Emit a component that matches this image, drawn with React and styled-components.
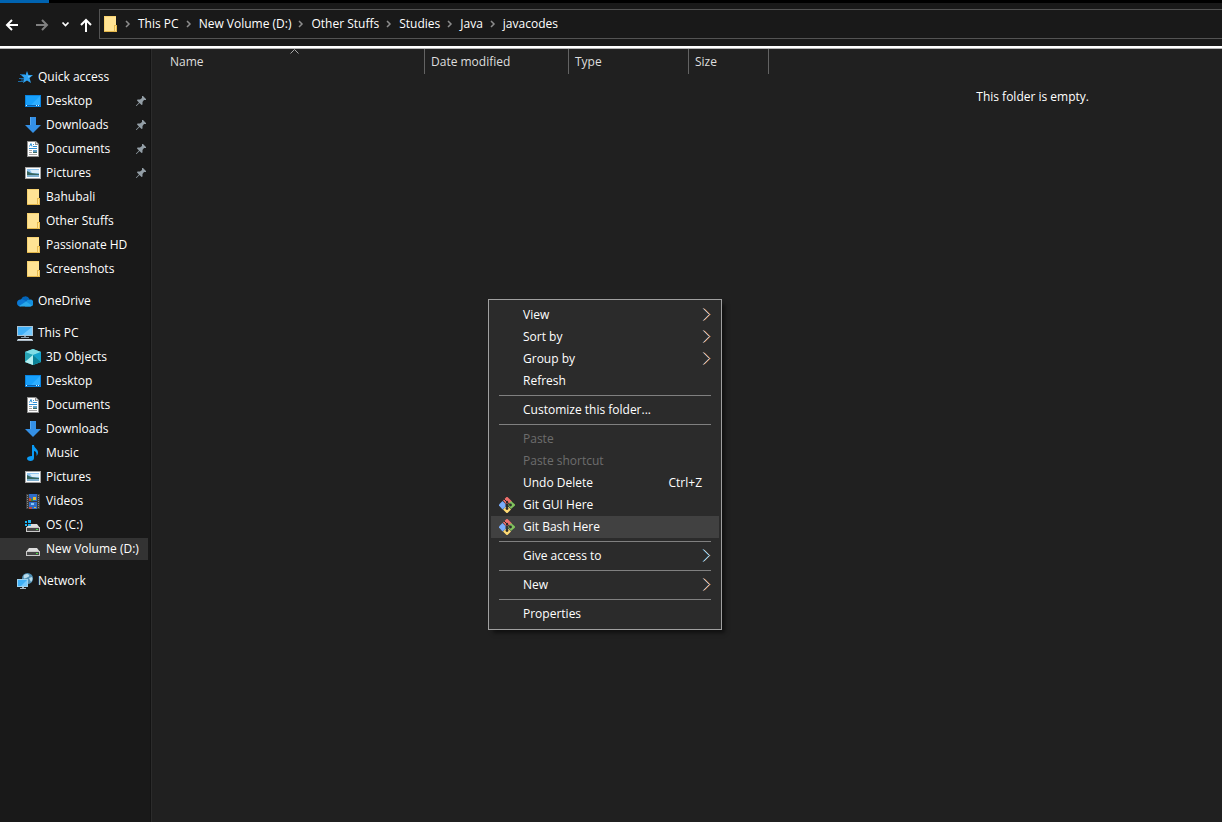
import React from "react";
import styled, { createGlobalStyle } from "styled-components";

const GlobalStyle = createGlobalStyle`
  * {
    box-sizing: border-box;
  }
  body {
    margin: 0;
    background: #202020;
    color: #ffffff;
    font-family: 'Segoe UI', 'Open Sans', 'Noto Sans', sans-serif;
    font-size: 12px;
    line-height: 16px;
  }
  button {
    font: inherit;
    color: inherit;
    border: 0;
    padding: 0;
    background: none;
  }
`

const Window = styled.div`
  display: flex;
  flex-direction: column;
  min-height: 100vh;
`

const TitleStrip = styled.div`
  height: 3px;
  background: #000000;
`

const FileTab = styled.div`
  width: 49px;
  height: 3px;
  background: #0063b1;
`

const Toolbar = styled.header`
  display: flex;
  align-items: center;
  height: 43px;
  padding-left: 4px;
  background: #191919;
`

const NavButton = styled.button`
  display: flex;
  align-items: center;
  justify-content: center;
  width: 16px;
  height: 24px;
  margin-right: ${props => props.$gap || 0}px;
  color: ${props => (props.$dim ? "#808080" : "#ffffff")};
`

const AddressBar = styled.nav`
  display: flex;
  align-items: center;
  flex: 1;
  height: 30px;
  margin-bottom: 1px;
  padding-left: 2px;
  border: 1px solid #535353;
  border-right: 0;
`

const Crumb = styled.a`
  color: #ffffff;
  text-decoration: none;
  white-space: nowrap;
`

const CrumbArrow = styled.span`
  display: flex;
  justify-content: center;
  width: 20px;
`

const Divider = styled.div`
  height: 3px;
  background: #ffffff;
  border-bottom: 1px solid #b4b4b4;
`

const Body = styled.div`
  display: flex;
  flex: 1;
`

const Sidebar = styled.nav`
  width: 150px;
  flex-shrink: 0;
  padding: 16px 2px 16px 0;
  background: #191919;
`

const Splitter = styled.div`
  width: 2px;
  background: #2b2b2b;
  border-left: 1px solid #131313;
`

const Group = styled.ul`
  list-style: none;
  margin: 0 0 8px;
  padding: 0;
`

const TreeItem = styled.li`
  padding: 1px 0;
`

const TreeLink = styled.a`
  display: flex;
  align-items: center;
  height: 22px;
  padding-left: ${props => (props.$child ? "25px" : "17px")};
  color: #ffffff;
  text-decoration: none;
  white-space: nowrap;
  background: ${props => (props.$selected ? "#333333" : "transparent")};
`

const TreeLabel = styled.span`
  flex: 1;
  margin-left: 5px;
`

const Pin = styled.span`
  display: flex;
  margin-right: 1px;
`

const Content = styled.main`
  flex: 1;
  background: #202020;
`

const FileTable = styled.table`
  width: 100%;
  table-layout: fixed;
  border-collapse: separate;
  border-spacing: 0;
`

const Column = styled.th`
  position: relative;
  width: ${props => props.$width}px;
  height: 25px;
  padding: 0 0 0 ${props => (props.$first ? "18px" : "6px")};
  border-right: ${props => (props.$width ? "1px solid #636363" : "0")};
  color: #dedede;
  font-weight: normal;
  text-align: left;
`

const SortMark = styled.span`
  position: absolute;
  top: 0;
  left: 12px;
  right: 0;
  display: flex;
  justify-content: center;
`

const EmptyMessage = styled.p`
  margin: 15px 133px 0 0;
  text-align: right;
`

const Menu = styled.div`
  position: absolute;
  left: 488px;
  top: 299px;
  width: 234px;
  padding: 4px 2px;
  background: #2b2b2b;
  border: 1px solid #a0a0a0;
  box-shadow: 4px 4px 4px -1px rgba(0, 0, 0, 0.5);
`

const MenuItem = styled.button`
  display: flex;
  align-items: center;
  width: 100%;
  height: 22px;
  padding: 0 8px;
  text-align: left;
  color: ${props => (props.disabled ? "#6d6d6d" : "#ffffff")};
  background: ${props => (props.$active ? "#414141" : "transparent")};
`

const MenuIcon = styled.span`
  display: flex;
  width: 24px;
`

const MenuLabel = styled.span`
  flex: 1;
`

const Shortcut = styled.span`
  margin-right: 9px;
`

const MenuLine = styled.hr`
  height: 1px;
  margin: 3px 8px;
  border: 0;
  background: #808080;
`

const Svg = ({ size = 16, children }) => (
  <svg width={size} height={size} viewBox={`0 0 ${size} ${size}`} aria-hidden="true">
    {children}
  </svg>
)

const ArrowIcon = ({ flip }) => (
  <Svg>
    <path
      d="M14 8H3M8 3L3 8l5 5"
      transform={flip ? "rotate(180 8 8)" : undefined}
      fill="none" stroke="currentColor" strokeWidth="2"
    />
  </Svg>
)

const UpIcon = () => (
  <Svg>
    <path d="M8 15V3M3 8l5-5 5 5" fill="none" stroke="currentColor" strokeWidth="2" />
  </Svg>
)

const DownChevron = () => (
  <Svg>
    <path d="M5.500 5.500l3 3 3-3" fill="none" stroke="currentColor" strokeWidth="1.700" />
  </Svg>
)

const CrumbChevron = () => (
  <svg width="6" height="8" viewBox="0 0 6 8" aria-hidden="true">
    <path d="M1 1l3 3-3 3" fill="none" stroke="#8c8c8c" strokeWidth="1.5" />
  </svg>
)

const FolderIcon = () => (
  <Svg>
    <path d="M2 0h12v10h1v6H2z" fill="#ffe394" />
    <path d="M2 0h12v1H2zM2 0h1v16H2z" fill="#f7d271" />
    <path d="M2 15h11v1H2z" fill="#e3b548" />
    <path d="M12 9h3v7h-3z" fill="#e8bb4f" />
    <path d="M13 10h1v5h-1z" fill="#ffe494" />
  </Svg>
)

const StarIcon = () => (
  <Svg>
    <path d="M3 5.500h5M2 9.500h6M1 12.500h5M4 11h3" stroke="#1b6ba6" />
    <path d="M10 2l1.500 4H16l-3.500 3 1.500 5-4-2.500L6 14l1.200-5L4 6h4.500z" fill="#2ea3f2" />
    <path d="M10 5l1 2h3l-2.500 2z" fill="#6cc4ff" />
  </Svg>
)

const DesktopIcon = () => (
  <Svg>
    <path d="M0 2h16v12H0z" fill="#0a84e0" />
    <path d="M1 3h14v9H1z" fill="#18a0fb" />
    <path d="M15 3v9H6z" fill="#2faeff" />
    <path d="M1 12h14v1H1z" fill="#0b5ea8" />
    <path d="M1 12h1v1H1zM11 12h1v1h-1zM13 12h1v1h-1z" fill="#d8efff" />
  </Svg>
)

const DownloadIcon = () => (
  <Svg>
    <path d="M5 0h6v8h5l-8 8-8-8h5z" fill="#3490e6" />
    <path d="M5 0h1v8H5z" fill="#57a8f0" />
  </Svg>
)

const DocumentIcon = () => (
  <Svg>
    <path d="M2 0h9l3 3v13H2z" fill="#8f8f8f" />
    <path d="M3 1h7v3h3v11H3z" fill="#ffffff" />
    <path d="M11 1l2 2h-2z" fill="#e4e4e4" />
    <path d="M4.500 5.500L6 2.500l1 3M8 3.500h1M8 5.500h4M4 7.500h8" stroke="#2f8fd5" fill="none" />
    <path d="M4 9.500h3M4 11.500h3M4 13.500h8" stroke="#a2a2a2" />
    <path d="M8 9h4v3H8z" fill="#5f9fc8" />
    <path d="M8 11h4v1H8z" fill="#3d6b62" />
  </Svg>
)

const PictureIcon = () => (
  <Svg>
    <path d="M0 2h16v12H0z" fill="#a4a4a4" />
    <path d="M1 3h14v10H1z" fill="#ffffff" />
    <path d="M2 4h12v8H2z" fill="#8fc4ef" />
    <path d="M5 5h9v3H7z" fill="#dceefa" />
    <path d="M2 6l4 2 8 1v1H2z" fill="#37665f" />
    <path d="M2 10h12v2H2z" fill="#7fb0cf" />
  </Svg>
)

const CloudIcon = () => (
  <Svg>
    <path d="M4 7a4.500 4.500 0 018.500-1L9 10 3 8z" fill="#0364b8" />
    <path d="M3.500 6.500C1.500 6.500 0 8 0 10s1.500 3.500 3.500 3.500L11 9 7 7a5 5 0 00-3.500-.5z" fill="#0a78d4" />
    <path d="M12.500 6.500a3.500 3.500 0 011 7H8l1-5a4 4 0 013.500-2z" fill="#1490df" />
    <path d="M2 13l7-4.500 6 4a3 3 0 01-2 1H3.500z" fill="#28a8ea" />
  </Svg>
)

const ComputerIcon = () => (
  <Svg>
    <path d="M0 1h16v10H0z" fill="#a9c4d6" />
    <path d="M1 2h14v8H1z" fill="#42b0f7" />
    <path d="M15 2v8H5z" fill="#74caff" />
    <path d="M7 11h2v1H7z" fill="#78909f" />
    <path d="M4 12h8v1H4z" fill="#8c9ca8" />
    <path d="M1 14h14l1 1v1H0v-1z" fill="#a9b8c4" />
    <path d="M1 14h14v1H1z" fill="#dde6ec" />
  </Svg>
)

const CubeIcon = () => (
  <Svg>
    <path d="M8 0l8 3v10l-8 3-8-3V3z" fill="#3fc3d3" />
    <path d="M8 0l8 3-8 3-8-3z" fill="#7fdde6" />
    <path d="M0 3l8 3-8 7z" fill="#27a4b5" />
    <path d="M8 6v10l-8-3z" fill="#b4f0f2" />
    <path d="M16 3v10L8 6z" fill="#14a3cc" />
    <path d="M8 6l8 7-8 3z" fill="#0b8196" />
  </Svg>
)

const MusicIcon = () => (
  <Svg>
    <path d="M7 0h2c0 3 4 4 4 7.500 0 2-1 3-1.500 3.500.500-3-.5-4.500-2.500-5V13c0 2-1.500 3-3.500 3S2 15 2 13.500 4 11 7 11z" fill="#0a9bf5" />
  </Svg>
)

const VideoIcon = () => (
  <Svg>
    <path d="M1 1h14v15H1z" fill="#3c3c3c" />
    <path d="M2.500 2v14M13.500 2v14" stroke="#8a8a8a" strokeDasharray="1 1" />
    <path d="M4 1h8v7H4zM4 9h8v7H4z" fill="#2e6cc8" />
    <path d="M4 5h2v3H4z" fill="#c84838" />
    <path d="M8 4h3v3H8z" fill="#e2bd36" />
    <path d="M6 6h2v2H6z" fill="#2f9144" />
    <path d="M6 10h3v2H6z" fill="#86c5f5" />
    <path d="M4 14h3v2H4z" fill="#b84a48" />
    <path d="M9 14h2v1H9z" fill="#e6b93a" />
  </Svg>
)

const DriveIcon = ({ system }) => (
  <Svg>
    <path d="M4 7h8l3 4H1z" fill="#dcdcdc" />
    <path d="M1 10h14v5H1z" fill="#c8c8c8" />
    <path d="M2 11h12v3H2z" fill="#454545" />
    <path d="M11 12h2v1h-2z" fill="#4fdc4a" />
    {system && (
      <>
        <path d="M0 3h6v6H0z" fill="#191919" />
        <path d="M0 4h2v2H0zM3 3h3v3H3zM0 7h2v2H0zM3 7h3v2H3z" fill="#1bb4f5" />
      </>
    )}
  </Svg>
)

const NetworkIcon = () => (
  <Svg>
    <circle cx="10.500" cy="5.500" r="5.500" fill="#4f8fb4" />
    <path d="M7 2c2-1.500 4-1.500 5 0s-1 2-3 3-3 0-2-3zM12 5l3-1c1 2 0 4-1 5z" fill="#b9dcec" />
    <path d="M0 6h11v8H0z" fill="#9fd3f0" />
    <path d="M1 7h9v6H1z" fill="#3fb0f7" />
    <path d="M10 7v6H4z" fill="#74caff" />
    <path d="M5 14h2v1H5zM3 15h6v1H3z" fill="#a9bcc8" />
  </Svg>
)

const PinIcon = () => (
  <svg width="12" height="12" viewBox="0 0 12 12" aria-hidden="true">
    <path d="M7 1h1l3 3v1h-2L7.500 7v2.500L6.500 10 4.500 8 1.500 11H1v-.5L4 7.500 2 5.500 2.500 4.500H5L7 3z" fill="#939ea6" />
  </svg>
)

const GitIcon = () => (
  <Svg>
    <path d="M7.500 0h1L13 4.500 9 7H7L4 3.500z" fill="#ef6f6c" />
    <path d="M12 4l4 3.500v1L12 12 9.500 9V7z" fill="#80c25c" />
    <path d="M8.500 16h-1L4 12.500 6.500 10h3L12 12.500z" fill="#ffdb74" />
    <path d="M3.500 4L6.500 7v3L3.500 12.500 0 8.500v-1z" fill="#7aacfa" />
    <path d="M5 2l3 3v7M8 5l3.500 3" fill="none" stroke="#2b2b2b" />
    <circle cx="8" cy="5" r="1.200" fill="#2b2b2b" />
    <circle cx="8" cy="11.500" r="1.400" fill="#2b2b2b" />
    <circle cx="11.500" cy="8" r="1.400" fill="#2b2b2b" />
  </Svg>
)

const SubmenuArrow = ({ cool }) => (
  <svg width="9" height="14" viewBox="0 0 9 14" aria-hidden="true">
    <path d="M2 .5l6 6-6 6" fill="none" stroke={cool ? "#8a6a50" : "#f08c50"} />
    <path d="M1 .5l6 6-6 6" fill="none" stroke={cool ? "#4ba3d8" : "#4a6f90"} />
    <path d="M1.500 .5l6 6-6 6" fill="none" stroke={cool ? "#d8f4ff" : "#ffe6d0"} strokeWidth=".7" />
  </svg>
)

const crumbs = ["This PC", "New Volume (D:)", "Other Stuffs", "Studies", "Java", "javacodes"]

const groups = [
  {
    root: { label: "Quick access", icon: <StarIcon /> },
    items: [
      { label: "Desktop", icon: <DesktopIcon />, pinned: true },
      { label: "Downloads", icon: <DownloadIcon />, pinned: true },
      { label: "Documents", icon: <DocumentIcon />, pinned: true },
      { label: "Pictures", icon: <PictureIcon />, pinned: true },
      { label: "Bahubali", icon: <FolderIcon /> },
      { label: "Other Stuffs", icon: <FolderIcon /> },
      { label: "Passionate HD", icon: <FolderIcon /> },
      { label: "Screenshots", icon: <FolderIcon /> },
    ],
  },
  { root: { label: "OneDrive", icon: <CloudIcon /> }, items: [] },
  {
    root: { label: "This PC", icon: <ComputerIcon /> },
    items: [
      { label: "3D Objects", icon: <CubeIcon /> },
      { label: "Desktop", icon: <DesktopIcon /> },
      { label: "Documents", icon: <DocumentIcon /> },
      { label: "Downloads", icon: <DownloadIcon /> },
      { label: "Music", icon: <MusicIcon /> },
      { label: "Pictures", icon: <PictureIcon /> },
      { label: "Videos", icon: <VideoIcon /> },
      { label: "OS (C:)", icon: <DriveIcon system /> },
      { label: "New Volume (D:)", icon: <DriveIcon />, selected: true },
    ],
  },
  { root: { label: "Network", icon: <NetworkIcon /> }, items: [] },
]

const columns = [
  { label: "Name", width: 273, sorted: true },
  { label: "Date modified", width: 144 },
  { label: "Type", width: 120 },
  { label: "Size", width: 80 },
]

const menu = [
  { label: "View", submenu: true },
  { label: "Sort by", submenu: true },
  { label: "Group by", submenu: true },
  { label: "Refresh" },
  { line: true },
  { label: "Customize this folder..." },
  { line: true },
  { label: "Paste", disabled: true },
  { label: "Paste shortcut", disabled: true },
  { label: "Undo Delete", shortcut: "Ctrl+Z" },
  { label: "Git GUI Here", icon: <GitIcon /> },
  { label: "Git Bash Here", icon: <GitIcon />, active: true },
  { line: true },
  { label: "Give access to", submenu: true, cool: true },
  { line: true },
  { label: "New", submenu: true },
  { line: true },
  { label: "Properties" },
]

const TreeRow = ({ item, child }) => (
  <TreeItem>
    <TreeLink href="#" $child={child} $selected={item.selected}>
      {item.icon}
      <TreeLabel>{item.label}</TreeLabel>
      {item.pinned && <Pin><PinIcon /></Pin>}
    </TreeLink>
  </TreeItem>
)

const ContextMenu = () => (
  <Menu role="menu">
    {menu.map((item, i) =>
      item.line ? (
        <MenuLine key={i} />
      ) : (
        <MenuItem key={i} role="menuitem" disabled={item.disabled} $active={item.active}>
          <MenuIcon>{item.icon}</MenuIcon>
          <MenuLabel>{item.label}</MenuLabel>
          {item.shortcut && <Shortcut>{item.shortcut}</Shortcut>}
          {item.submenu && <SubmenuArrow cool={item.cool} />}
        </MenuItem>
      )
    )}
  </Menu>
)

const App = () => (
  <>
    <GlobalStyle />
    <Window>
      <TitleStrip>
        <FileTab />
      </TitleStrip>
      <Toolbar>
        <NavButton aria-label="Back" $gap={14}><ArrowIcon /></NavButton>
        <NavButton aria-label="Forward" $gap={7} $dim><ArrowIcon flip /></NavButton>
        <NavButton aria-label="Recent locations" $gap={5}><DownChevron /></NavButton>
        <NavButton aria-label="Up" $gap={5}><UpIcon /></NavButton>
        <AddressBar aria-label="Address">
          <FolderIcon />
          {crumbs.map(name => (
            <React.Fragment key={name}>
              <CrumbArrow><CrumbChevron /></CrumbArrow>
              <Crumb href="#">{name}</Crumb>
            </React.Fragment>
          ))}
        </AddressBar>
      </Toolbar>
      <Divider />
      <Body>
        <Sidebar aria-label="Folders">
          {groups.map(group => (
            <Group key={group.root.label}>
              <TreeRow item={group.root} />
              {group.items.map(item => (
                <TreeRow key={item.label} item={item} child />
              ))}
            </Group>
          ))}
        </Sidebar>
        <Splitter />
        <Content>
          <FileTable>
            <thead>
              <tr>
                {columns.map(col => (
                  <Column key={col.label} $width={col.width} $first={col.sorted}>
                    {col.label}
                    {col.sorted && (
                      <SortMark>
                        <svg width="9" height="5" viewBox="0 0 9 5" aria-hidden="true">
                          <path d="M.5 4.500l4-4 4 4" fill="none" stroke="#a8a8a8" />
                        </svg>
                      </SortMark>
                    )}
                  </Column>
                ))}
                <Column as="td" />
              </tr>
            </thead>
          </FileTable>
          <EmptyMessage>This folder is empty.</EmptyMessage>
        </Content>
      </Body>
    </Window>
    <ContextMenu />
  </>
)

export default App
